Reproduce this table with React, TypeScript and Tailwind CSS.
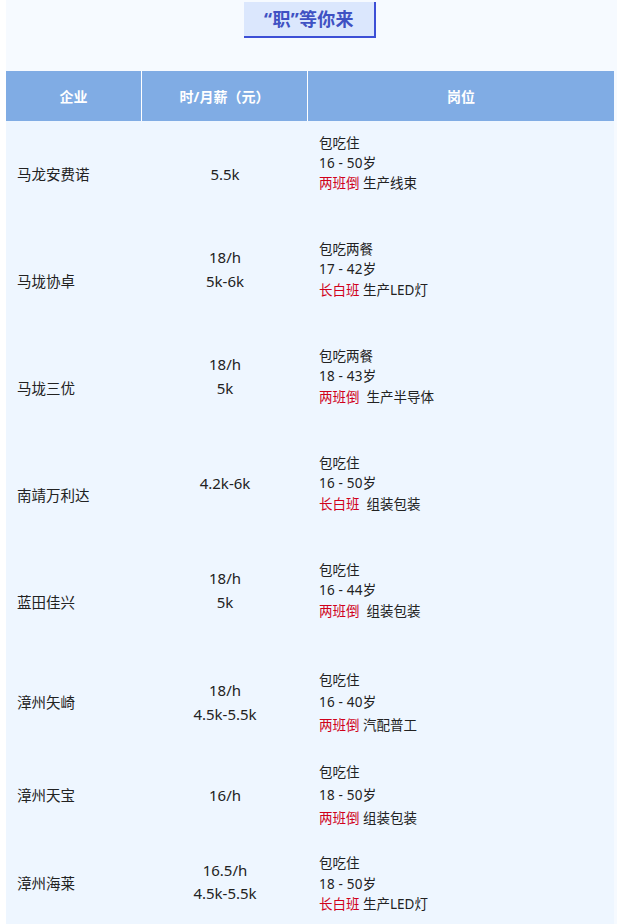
import React from 'react';

interface Row {
  name: string;
  pay: string[];
  food: string;
  age: string;
  shift: string;
  job: string;
  h: string;
  lead: string;
  padPay: string;
  padJob: string;
}

const rows: Row[] = [
  { name: '马龙安费诺', pay: ['5.5k'], food: '包吃住', age: '16 - 50岁', shift: '两班倒', job: ' 生产线束', h: 'h-[107px]', lead: 'leading-[20px]', padPay: '', padJob: 'pb-[24px]' },
  { name: '马垅协卓', pay: ['18/h', '5k-6k'], food: '包吃两餐', age: '17 - 42岁', shift: '长白班', job: ' 生产LED灯', h: 'h-[107px]', lead: 'leading-[20.5px]', padPay: 'pb-[24px]', padJob: 'pb-[24px]' },
  { name: '马垅三优', pay: ['18/h', '5k'], food: '包吃两餐', age: '18 - 43岁', shift: '两班倒', job: '  生产半导体', h: 'h-[107px]', lead: 'leading-[20.5px]', padPay: 'pb-[24px]', padJob: 'pb-[24px]' },
  { name: '南靖万利达', pay: ['4.2k-6k'], food: '包吃住', age: '16 - 50岁', shift: '长白班', job: '  组装包装', h: 'h-[107px]', lead: 'leading-[20.5px]', padPay: 'pb-[24px]', padJob: 'pb-[24px]' },
  { name: '蓝田佳兴', pay: ['18/h', '5k'], food: '包吃住', age: '16 - 44岁', shift: '两班倒', job: '  组装包装', h: 'h-[107px]', lead: 'leading-[20.5px]', padPay: 'pb-[24px]', padJob: 'pb-[24px]' },
  { name: '漳州矢崎', pay: ['18/h', '4.5k-5.5k'], food: '包吃住', age: '16 - 40岁', shift: '两班倒', job: ' 汽配普工', h: 'h-[93px]', lead: 'leading-[22.5px]', padPay: '', padJob: '' },
  { name: '漳州天宝', pay: ['16/h'], food: '包吃住', age: '18 - 50岁', shift: '两班倒', job: ' 组装包装', h: 'h-[93px]', lead: 'leading-[23px]', padPay: '', padJob: '' },
  { name: '漳州海莱', pay: ['16.5/h', '4.5k-5.5k'], food: '包吃住', age: '18 - 50岁', shift: '长白班', job: ' 生产LED灯', h: 'h-[84px]', lead: 'leading-[20.5px]', padPay: 'pb-[4px]', padJob: '' },
];

export default function App() {
  return (
    <div className="h-[924px] overflow-hidden bg-white pl-[6px] font-['Noto_Sans','Noto_Sans_CJK_SC',sans-serif] text-[#222]">
      <div className="h-full bg-[#f6faff] pr-[3px]">
        <div className="flex justify-center pt-[2px]">
          <div className="flex h-[36px] w-[132px] items-center justify-center border-b-2 border-r-2 border-[#3c4fd6] bg-[#dbe7fd] text-[18px] font-bold tracking-[0.3px] text-[#3f51c3]">
            “职”等你来
          </div>
        </div>

        <div className="mt-[33px]">
          <div className="grid h-[50px] grid-cols-[136px_166px_1fr] bg-[#80ace4] text-[14px] font-bold text-white">
            <div className="flex items-center justify-center border-r border-white">企业</div>
            <div className="flex items-center justify-center border-r border-white">时/月薪（元）</div>
            <div className="flex items-center justify-center">岗位</div>
          </div>

          <div className="bg-[#eef6ff]">
            {rows.map((r) => (
              <div key={r.name} className={`grid grid-cols-[136px_166px_1fr] ${r.h}`}>
                <div className="flex items-center pl-[11px] text-[14.5px]">{r.name}</div>
                <div className={`flex flex-col items-center justify-center text-[15px] leading-[23.5px] ${r.padPay}`}>
                  {r.pay.map((p) => (
                    <div key={p}>{p}</div>
                  ))}
                </div>
                <div className={`flex flex-col justify-center pl-[11px] text-[13.5px] ${r.lead} ${r.padJob}`}>
                  <div>{r.food}</div>
                  <div className="tracking-[0.2px]">{r.age}</div>
                  <div className="whitespace-pre">
                    <span className="text-[#d0021b]">{r.shift}</span>
                    {r.job}
                  </div>
                </div>
              </div>
            ))}
          </div>
        </div>
      </div>
    </div>
  );
}
